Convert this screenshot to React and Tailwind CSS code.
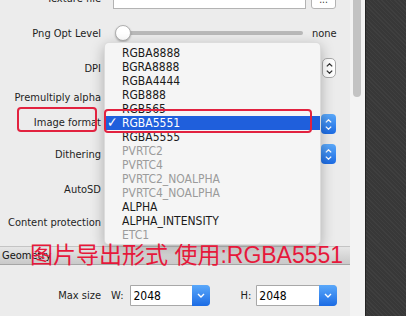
import React from 'react';

const items = [
  { t: 'RGBA8888' },
  { t: 'BGRA8888' },
  { t: 'RGBA4444' },
  { t: 'RGB888' },
  { t: 'RGB565' },
  { t: 'RGBA5551', sel: true },
  { t: 'RGBA5555' },
  { t: 'PVRTC2', off: true },
  { t: 'PVRTC4', off: true },
  { t: 'PVRTC2_NOALPHA', off: true },
  { t: 'PVRTC4_NOALPHA', off: true },
  { t: 'ALPHA' },
  { t: 'ALPHA_INTENSITY' },
  { t: 'ETC1', off: true },
];

function Label({ children, className = '' }) {
  return <div className={`w-[101px] shrink-0 text-right text-[#1e1e1e] whitespace-nowrap ${className}`}>{children}</div>;
}

function Stepper({ blue }) {
  const stroke = blue ? '#ffffff' : '#333333';
  return (
    <div
      className={
        blue
          ? 'w-[15px] h-[20px] rounded-[4px] bg-gradient-to-b from-[#5aa8fa] to-[#1b6be4] flex flex-col items-center justify-center gap-[3px]'
          : 'w-[14px] h-[20px] rounded-[5px] bg-white border border-[#a9a9a9] flex flex-col items-center justify-center gap-[3px]'
      }
    >
      <svg width="7" height="4" viewBox="0 0 7 4"><path d="M0.8 3.4 L3.5 0.8 L6.2 3.4" fill="none" stroke={stroke} strokeWidth="1.3" /></svg>
      <svg width="7" height="4" viewBox="0 0 7 4"><path d="M0.8 0.6 L3.5 3.2 L6.2 0.6" fill="none" stroke={stroke} strokeWidth="1.3" /></svg>
    </div>
  );
}

function Combo({ w, value }) {
  return (
    <div className={`flex h-[21px] ${w} border border-[#a8a8a8] bg-white rounded-r-[4px]`}>
      <div className="flex-1 pl-[2px] flex items-center text-[12px] text-black">{value}</div>
      <div className="w-[18px] -my-px -mr-px rounded-r-[4px] bg-gradient-to-b from-[#5aa8fa] to-[#1b6be4] flex items-center justify-center">
        <svg width="8" height="5" viewBox="0 0 8 5"><path d="M1 1 L4 4 L7 1" fill="none" stroke="#fff" strokeWidth="1.4" /></svg>
      </div>
    </div>
  );
}

export default function App() {
  return (
    <div className="w-[406px] h-[316px] overflow-hidden flex text-[11px] font-['DejaVu_Sans_Condensed','DejaVu_Sans',sans-serif] leading-none">
      {/* Panel */}
      <div className="relative w-[350px] shrink-0 bg-[#ececec] overflow-hidden">
        <div className="flex flex-col -mt-[13px]">
          {/* Texture file */}
          <div className="flex items-center h-[22px]">
            <Label>Texture file</Label>
            <div className="ml-[12px] w-[193px] h-[22px] bg-white border border-[#b3b3b3]" />
            <div className="ml-[5px] w-[25px] h-[22px] bg-white border border-[#b3b3b3] rounded-[3px] flex items-end justify-center pb-[3px] text-[10px] text-[#333]">...</div>
          </div>

          {/* Png Opt Level */}
          <div className="flex items-center h-[20px] mt-[14px]">
            <Label>Png Opt Level</Label>
            <div className="ml-[15px] relative w-[187px] h-[4px] rounded-full bg-[#b9b9b9] flex items-center">
              <div className="w-[16px] h-[16px] -ml-[1px] rounded-full bg-white border border-[#b0b0b0] shadow-[0_1px_2px_rgba(0,0,0,0.25)]" />
            </div>
            <div className="ml-[9px] text-[#1e1e1e]">none</div>
          </div>

          {/* DPI */}
          <div className="flex items-center h-[22px] mt-[14px]">
            <Label>DPI</Label>
            <div className="ml-[12px] w-[196px] h-[22px] bg-white border border-[#b3b3b3]" />
            <div className="ml-[13px]"><Stepper /></div>
          </div>

          {/* Premultiply alpha */}
          <div className="flex items-center h-[20px] mt-[8px]">
            <Label>Premultiply alpha</Label>
          </div>

          {/* Image format */}
          <div className="flex items-center h-[20px] mt-[7px]">
            <Label className="mb-[4px]">Image format</Label>
            <div className="ml-[220px]"><Stepper blue /></div>
          </div>

          {/* Dithering */}
          <div className="flex items-center h-[20px] mt-[10px]">
            <Label>Dithering</Label>
            <div className="ml-[220px]"><Stepper blue /></div>
          </div>

          {/* AutoSD */}
          <div className="flex items-center h-[20px] mt-[15px]">
            <Label>AutoSD</Label>
          </div>

          {/* Content protection */}
          <div className="flex items-center h-[22px] mt-[12px]">
            <Label>Content protection</Label>
            <div className="ml-[12px] w-[190px] h-[22px] bg-white border border-[#b3b3b3]" />
          </div>

          {/* Geometry section */}
          <div className="mt-[13px] h-[19px] flex items-center pl-[2px] bg-gradient-to-b from-[#e6e6e6] to-[#c9c9c9] border-t border-[#c4c4c4] border-b border-b-[#a6a6a6] text-[#111]">
            Geometry
          </div>

          {/* Max size */}
          <div className="flex items-center h-[21px] mt-[20px]">
            <Label>Max size</Label>
            <div className="ml-[10px] text-[#1e1e1e]">W:</div>
            <div className="ml-[7px]"><Combo w="w-[80px]" value="2048" /></div>
            <div className="ml-[30px] text-[#1e1e1e]">H:</div>
            <div className="ml-[5px]"><Combo w="w-[81px]" value="2048" /></div>
          </div>
        </div>

        {/* Popup menu */}
        <div className="absolute left-[104px] top-[42px] w-[217px] h-[203px] pt-[3px] rounded-[5px] bg-[#f5f5f5] border border-black/10 shadow-[0_4px_14px_rgba(0,0,0,0.28)]">
          {items.map((it) => (
            <div
              key={it.t}
              className={
                it.sel
                  ? 'relative h-[14px] flex items-center pl-[17px] bg-[#1f5fdc] text-white text-[12px]'
                  : it.off
                  ? 'h-[14px] flex items-center pl-[17px] text-[#9b9b9b] text-[12px]'
                  : 'h-[14px] flex items-center pl-[17px] text-[#1a1a1a] text-[12px]'
              }
            >
              {it.sel && <span className="absolute left-[2px] top-[-1px] text-[14px] font-bold">✓</span>}
              {it.t}
            </div>
          ))}
        </div>

        {/* Annotation boxes */}
        <div className="absolute left-[17px] top-[107px] w-[80px] h-[25px] rounded-[4px] border-2 border-[#e2223f]" />
        <div className="absolute left-[104px] top-[109px] w-[208px] h-[24px] rounded-[4px] border-2 border-[#e2223f]" />

        {/* Annotation text */}
        <div className="absolute left-[30px] top-[243px] text-[23px] leading-[24px] text-[#e6183b] whitespace-nowrap font-['Liberation_Sans','Noto_Sans_CJK_SC',sans-serif]">
          图片导出形式 使用:RGBA5551
        </div>
      </div>

      {/* Scrollbar */}
      <div className="w-[15px] shrink-0 bg-[#f3f3f3] pl-[3px]">
        <div className="w-[8px] h-[97px] rounded-b-full bg-[#c3c3c3]" />
      </div>

      {/* Dark side */}
      <div className="flex-1 border-l border-[#242424] bg-[#3c3c3c] bg-[repeating-linear-gradient(45deg,#3f3f3f_0px,#3f3f3f_1px,#383838_1px,#383838_3px)]" />
    </div>
  );
}
